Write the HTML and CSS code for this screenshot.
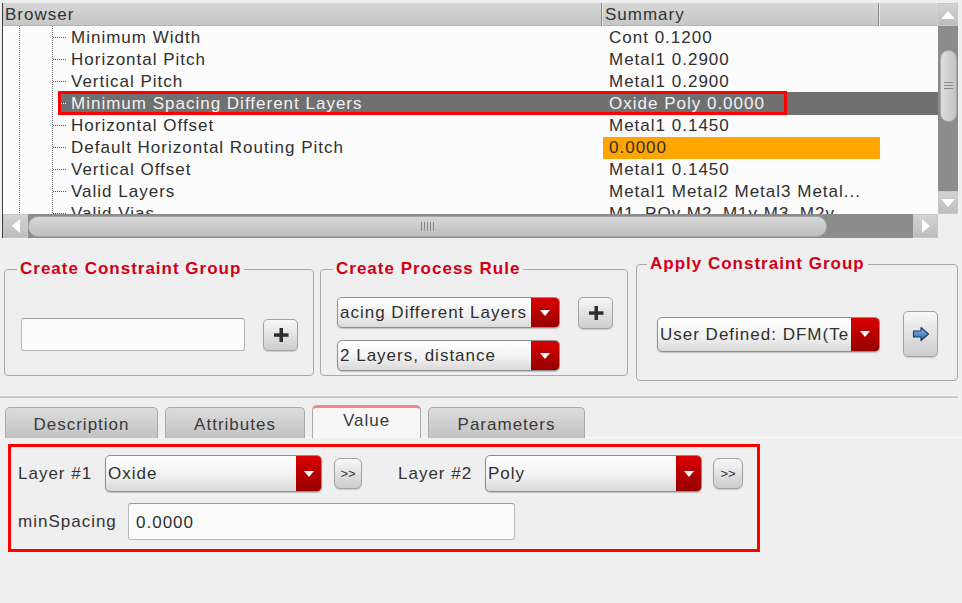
FILE: index.html
```html
<!DOCTYPE html>
<html>
<head>
<meta charset="utf-8">
<title>Constraint Browser</title>
<link rel="stylesheet" href="styles.css">
</head>
<body>
<div class="browser">
  <div class="list">
    <div class="hdr">
      <div class="hc hc1">Browser</div>
      <div class="hc hc2">Summary</div>
      <div class="hc hc3"></div>
    </div>
    <div class="row"><div class="name">Minimum Width</div><div class="sum">Cont 0.1200</div><div class="ext"></div></div>
    <div class="row"><div class="name">Horizontal Pitch</div><div class="sum">Metal1 0.2900</div><div class="ext"></div></div>
    <div class="row"><div class="name">Vertical Pitch</div><div class="sum">Metal1 0.2900</div><div class="ext"></div></div>
    <div class="row sel"><div class="name">Minimum Spacing Different Layers</div><div class="sum">Oxide Poly 0.0000</div><div class="ext"></div></div>
    <div class="row"><div class="name">Horizontal Offset</div><div class="sum">Metal1 0.1450</div><div class="ext"></div></div>
    <div class="row"><div class="name">Default Horizontal Routing Pitch</div><div class="sum hot">0.0000</div><div class="ext"></div></div>
    <div class="row"><div class="name">Vertical Offset</div><div class="sum">Metal1 0.1450</div><div class="ext"></div></div>
    <div class="row"><div class="name">Valid Layers</div><div class="sum">Metal1 Metal2 Metal3 Metal...</div><div class="ext"></div></div>
    <div class="row"><div class="name">Valid Vias</div><div class="sum">M1_POv M2_M1v M3_M2v</div><div class="ext"></div></div>
    <div class="selbox"></div>
  </div>
  <div class="vscroll">
    <div class="sbtn"><span class="tri-up"></span></div>
    <div class="vtrough"><div class="vthumb"><span class="vgrip"></span></div></div>
    <div class="sbtn"><span class="tri-down"></span></div>
  </div>
  <div class="hscroll">
    <div class="sbtn"><span class="tri-left"></span></div>
    <div class="htrough"><div class="hthumb"><span class="hgrip"></span></div></div>
    <div class="sbtn"><span class="tri-right"></span></div>
  </div>
  <div class="corner"></div>
</div>

<div class="groups">
  <fieldset class="fs fs1">
    <legend>Create Constraint Group</legend>
    <div class="fs-body body1">
      <div class="field f1"></div>
      <div class="btn plus"><svg width="16" height="16" viewBox="0 0 16 16"><rect x="6.5" y="1" width="3.5" height="14" fill="#2f2f2f"/><rect x="1" y="6.3" width="14.5" height="3.5" fill="#2f2f2f"/></svg></div>
    </div>
  </fieldset>
  <fieldset class="fs fs2">
    <legend>Create Process Rule</legend>
    <div class="fs-body body2">
      <div class="combos">
        <div class="combo c31"><span class="ctext">acing Different Layers</span><span class="drop"><span class="tri-w"></span></span></div>
        <div class="combo c31"><span class="ctext">2 Layers, distance</span><span class="drop"><span class="tri-w"></span></span></div>
      </div>
      <div class="btn plus plus2"><svg width="16" height="16" viewBox="0 0 16 16"><rect x="6.5" y="1" width="3.5" height="14" fill="#2f2f2f"/><rect x="1" y="6.3" width="14.5" height="3.5" fill="#2f2f2f"/></svg></div>
    </div>
  </fieldset>
  <fieldset class="fs fs3">
    <legend>Apply Constraint Group</legend>
    <div class="fs-body body3">
      <div class="combo c35"><span class="ctext">User Defined: DFM(Te</span><span class="drop"><span class="tri-w"></span></span></div>
      <div class="btn apply"><svg width="18" height="16" viewBox="0 0 18 16"><defs><linearGradient id="ag" x1="0" y1="0" x2="0" y2="1"><stop offset="0" stop-color="#8cc0ec"/><stop offset="1" stop-color="#2a5e9c"/></linearGradient></defs><polygon points="1.5,5 9,5 9,1.5 16.5,8 9,14.5 9,11 1.5,11" fill="url(#ag)" stroke="#1d3f6a" stroke-width="1.2" stroke-linejoin="round"/></svg></div>
    </div>
  </fieldset>
</div>

<div class="sep"></div>

<div class="tabs">
  <div class="tab t-desc">Description</div>
  <div class="tab t-attr">Attributes</div>
  <div class="tab t-val active">Value</div>
  <div class="tab t-par">Parameters</div>
</div>

<div class="pane">
  <div class="frow">
    <span class="lbl l1">Layer #1</span>
    <div class="combo c37 w217"><span class="ctext">Oxide</span><span class="drop d25"><span class="tri-w"></span></span></div>
    <div class="btn more">&gt;&gt;</div>
    <span class="lbl l2">Layer #2</span>
    <div class="combo c37 w217"><span class="ctext">Poly</span><span class="drop d25"><span class="tri-w"></span></span></div>
    <div class="btn more more2">&gt;&gt;</div>
  </div>
  <div class="frow frow2">
    <span class="lbl l3">minSpacing</span>
    <div class="field f2">0.0000</div>
  </div>
</div>
</body>
</html>
```

FILE: styles.css
```css
html, body {
  margin: 0;
  padding: 0;
}
body {
  width: 962px;
  height: 603px;
  overflow: hidden;
  background: #efefef;
  font-family: "Liberation Sans", Arial, sans-serif;
  font-size: 17px;
  letter-spacing: 1px;
  color: #2f2f2f;
}

/* ---------- browser tree/table ---------- */
.browser {
  margin: 3px 4px 0 2px;
  display: grid;
  grid-template-columns: 935px 20px;
  grid-template-rows: 211px 24px;
  border-left: 1px solid #3c3c3c;
}
.list {
  position: relative;
  overflow: hidden;
  background: #fcfcfc;
}
.hdr {
  display: grid;
  grid-template-columns: 598px 277px 1fr;
  height: 23px;
  line-height: 23px;
  background: linear-gradient(#d7d7d7, #c6c6c6);
  border-bottom: 1px solid #b5b5b5;
  box-sizing: border-box;
}
.hc {
  color: #333;
  white-space: nowrap;
}
.hc1 { padding-left: 2px; }
.hc2 {
  padding-left: 3px;
  border-left: 1px solid #8a8a8a;
  box-shadow: inset 1px 0 0 #e8e8e8;
}
.hc3 {
  border-left: 1px solid #8a8a8a;
  box-shadow: inset 1px 0 0 #e8e8e8;
}
.row {
  display: grid;
  grid-template-columns: 598px 277px 1fr;
  height: 22px;
  line-height: 23px;
  white-space: nowrap;
}
.name {
  display: flex;
  align-items: center;
  background-image:
    linear-gradient(#6a6a6a 50%, transparent 50%),
    linear-gradient(#6a6a6a 50%, transparent 50%);
  background-size: 1px 2px, 1px 2px;
  background-position: 16px 0, 49px 0;
  background-repeat: repeat-y;
  color: #2f2f2f;
}
.name::before {
  content: "";
  width: 13px;
  height: 0;
  margin-left: 50px;
  margin-right: 5px;
  border-top: 1px dotted #555;
}
.sum {
  padding-left: 8px;
  color: #2f2f2f;
}
.sum.hot {
  background: #ffa500;
  margin: 1px -2px 0 2px;
  line-height: 21px;
  padding-left: 6px;
}
.row.sel .name {
  background-image:
    linear-gradient(#6a6a6a 50%, transparent 50%),
    linear-gradient(#6a6a6a 50%, transparent 50%),
    linear-gradient(to right, transparent 57px, #707070 57px);
  background-size: 1px 2px, 1px 2px, 100% 100%;
  background-position: 16px 0, 49px 0, 0 0;
  background-repeat: repeat-y, repeat-y, no-repeat;
  color: #f2f2f2;
}
.row.sel .name::before {
  border-top-color: #fff;
}
.row.sel .sum,
.row.sel .ext {
  background: #707070;
  color: #f2f2f2;
}
.selbox {
  position: absolute;
  left: 55px;
  top: 88px;
  width: 729px;
  height: 24px;
  box-sizing: border-box;
  border: 3px solid #ff0000;
}

/* scrollbars */
.vscroll {
  display: grid;
  grid-template-rows: 23px 1fr 23px;
  background: #8c8c8c;
}
.sbtn {
  display: flex;
  align-items: center;
  justify-content: center;
  background: linear-gradient(#d4d4d4, #bcbcbc);
  box-shadow: inset 0 0 0 1px #c8c8c8;
}
.tri-up {
  width: 0; height: 0;
  border-left: 7px solid transparent;
  border-right: 7px solid transparent;
  border-bottom: 8px solid #fff;
}
.tri-down {
  width: 0; height: 0;
  border-left: 7px solid transparent;
  border-right: 7px solid transparent;
  border-top: 8px solid #fff;
}
.tri-left {
  width: 0; height: 0;
  border-top: 7px solid transparent;
  border-bottom: 7px solid transparent;
  border-right: 8px solid #fff;
}
.tri-right {
  width: 0; height: 0;
  border-top: 7px solid transparent;
  border-bottom: 7px solid transparent;
  border-left: 8px solid #fff;
}
.vtrough {
  background: #8c8c8c;
  padding-top: 24px;
  display: flex;
  justify-content: center;
}
.vthumb {
  width: 17px;
  height: 72px;
  border-radius: 9px;
  background: linear-gradient(to right, #dedede, #c4c4c4);
  border: 1px solid #a8a8a8;
  box-sizing: border-box;
  display: flex;
  align-items: center;
  justify-content: center;
}
.vgrip {
  width: 9px;
  height: 9px;
  background: repeating-linear-gradient(#8a8a8a 0 1px, transparent 1px 3px);
}
.hscroll {
  display: grid;
  grid-template-columns: 25px 1fr 25px;
  background: #8c8c8c;
}
.htrough {
  background: #8c8c8c;
  display: flex;
  align-items: center;
}
.hthumb {
  width: 799px;
  height: 21px;
  border-radius: 10px;
  background: linear-gradient(#d6d6d6, #bfbfbf);
  border: 1px solid #a6a6a6;
  box-sizing: border-box;
  display: flex;
  align-items: center;
  justify-content: center;
}
.hgrip {
  width: 13px;
  height: 9px;
  background: repeating-linear-gradient(to right, #8a8a8a 0 1px, transparent 1px 3px);
}
.corner {
  background: #efefef;
}

/* ---------- group boxes ---------- */
.groups {
  display: flex;
  align-items: center;
  margin: 15px 0 0 4px;
}
.fs {
  margin: 0;
  padding: 0;
  border: 1px solid #a9a9a9;
  border-radius: 4px;
  box-sizing: border-box;
  min-width: 0;
}
.fs legend {
  margin-left: 12px;
  padding: 0 3px;
  font-weight: bold;
  color: #d20016;
  line-height: 22px;
  height: 22px;
  white-space: nowrap;
}
.fs1 { width: 310px; }
.fs2 { width: 308px; margin-left: 6px; }
.fs3 { width: 322px; margin-left: 8px; }
.fs3 legend { margin-left: 10px; }
.fs-body {
  display: flex;
}
.body1 {
  align-items: center;
  padding: 38px 0 24px 16px;
}
.body2 {
  align-items: flex-start;
  padding: 17px 0 4px 16px;
}
.body3 {
  align-items: center;
  padding: 36px 0 23px 20px;
}
.combos {
  display: flex;
  flex-direction: column;
  gap: 12px;
}

.field {
  background: #fbfbfb;
  border: 1px solid #b8b8b8;
  border-top-color: #9a9a9a;
  border-radius: 3px;
  box-sizing: border-box;
}
.f1 {
  width: 224px;
  height: 33px;
}
.btn {
  box-sizing: border-box;
  border: 1px solid #a2a2a2;
  border-radius: 5px;
  background: linear-gradient(#f7f7f7, #cdcdcd);
  display: flex;
  align-items: center;
  justify-content: center;
  box-shadow: 0 1px 1px rgba(0,0,0,0.15);
}
.plus {
  width: 35px;
  height: 32px;
  margin-left: 18px;
}
.plus2 {
  margin-left: 18px;
}
.apply {
  width: 35px;
  height: 46px;
  margin-left: 23px;
}

.combo {
  box-sizing: border-box;
  display: flex;
  align-items: stretch;
  border: 1px solid #8e8e8e;
  border-radius: 5px;
  background: linear-gradient(#ffffff, #f2f2f2 55%, #d9d9d9);
  overflow: hidden;
  width: 223px;
  box-shadow: 0 1px 1px rgba(0,0,0,0.2);
}
.c31 { height: 31px; }
.c35 { height: 35px; }
.c37 { height: 37px; }
.w217 { width: 217px; }
.ctext {
  flex: 1;
  min-width: 0;
  overflow: hidden;
  white-space: nowrap;
  padding-left: 2px;
  padding-top: 1px;
  display: flex;
  align-items: center;
  color: #2f2f2f;
}
.drop {
  width: 28px;
  flex: none;
  background: linear-gradient(#d90000, #b00000 60%, #980000);
  display: flex;
  align-items: center;
  justify-content: center;
}
.d25 { width: 25px; }
.tri-w {
  width: 0;
  height: 0;
  border-left: 5px solid transparent;
  border-right: 5px solid transparent;
  border-top: 6px solid #fff;
}

/* ---------- separator + tabs ---------- */
.sep {
  margin-top: 14px;
  height: 0;
  border-top: 1px solid #fbfbfb;
  border-bottom: 2px solid #c9c9c9;
  margin-right: 4px;
}
.tabs {
  display: flex;
  align-items: flex-end;
  height: 33px;
  margin-top: 7px;
  padding-left: 5px;
  gap: 7px;
  box-shadow: inset 0 -1px 0 #fafafa;
}
.tab {
  box-sizing: border-box;
  height: 31px;
  border: 1px solid #aaaaaa;
  border-bottom: none;
  border-radius: 5px 5px 0 0;
  background: linear-gradient(#dcdcdc, #c3c3c3);
  text-align: center;
  line-height: 33px;
  color: #3a3a3a;
}
.t-desc { width: 153px; }
.t-attr { width: 140px; }
.t-val { width: 109px; }
.t-par { width: 157px; }
.tab.active {
  height: 33px;
  background: #f7f7f7;
  border-top: 3px solid #f08a8a;
  line-height: 26px;
}

/* ---------- value pane ---------- */
.pane {
  margin: 6px 0 0 8px;
  width: 752px;
  box-sizing: border-box;
  border: 3px solid #ff0000;
  padding: 8px 0 9px 7px;
}
.frow {
  display: flex;
  align-items: center;
  height: 37px;
}
.frow2 {
  margin-top: 11px;
}
.lbl {
  color: #333;
  white-space: nowrap;
  padding-top: 1px;
}
.l1 { width: 87px; }
.l2 { width: 87px; margin-left: 36px; }
.l3 { width: 110px; }
.more {
  width: 28px;
  height: 31px;
  margin-left: 12px;
  font-size: 13px;
  letter-spacing: 0;
  color: #333;
  border-radius: 6px;
}
.more2 {
  width: 30px;
  margin-left: 11px;
}
.f2 {
  width: 387px;
  height: 37px;
  line-height: 37px;
  padding-left: 7px;
  color: #2f2f2f;
}
```
